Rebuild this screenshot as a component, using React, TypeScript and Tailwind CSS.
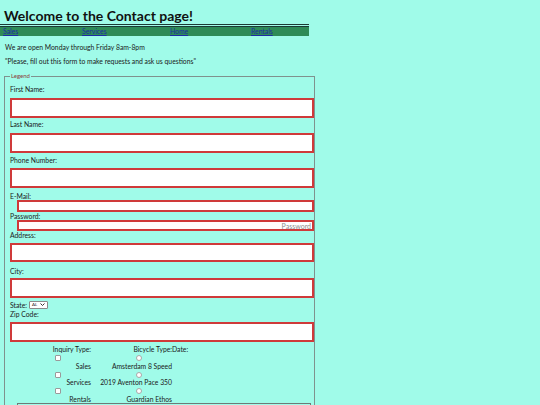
import React from "react"

const inquiry = ["Sales", "Services", "Rentals"]
const bikes = ["Amsterdam 8 Speed", "2019 Aventon Pace 350", "Guardian Ethos"]

function Field({ label, mt, inputMt, h }: { label: string; mt: string; inputMt: string; h: string }) {
  return (
    <>
      <label className={`block leading-[9px] ${mt}`}>{label}</label>
      <input
        type="text"
        className={`block w-[304px] border-2 border-[#cf3a3a] bg-white outline-none ${inputMt} ${h}`}
      />
    </>
  )
}

export default function App() {
  return (
    <div className="min-h-[405px] w-full overflow-hidden bg-[#a0fbe9] font-['Lato',sans-serif] text-[6.8px] text-[#1a1a1a]">
      <div className="w-[309px]">
        <h1 className="h-[24px] pl-[4px] pt-[9px] text-[14px] font-bold leading-[14px] text-[#111]">
          Welcome to the Contact page!
        </h1>
        <div className="h-px bg-[#1b3a34]" />
        <div className="h-px" />
        <div className="h-px bg-[#1b3a34]" />
        <nav className="flex h-[9px] bg-[#2e8b57] pl-[3px] leading-[9px]">
          <a href="#" className="w-[79px] text-[#1d2aa6] underline">Sales</a>
          <a href="#" className="w-[88px] text-[#1d2aa6] underline">Services</a>
          <a href="#" className="w-[81px] text-[#1d2aa6] underline">Home</a>
          <a href="#" className="text-[#1d2aa6] underline">Rentals</a>
        </nav>
      </div>

      <p className="mt-[7px] pl-[5px] leading-[9px]">We are open Monday through Friday 8am-8pm</p>
      <p className="mt-[5px] pl-[5px] leading-[9px]">"Please, fill out this form to make requests and ask us questions"</p>

      <form>
        <fieldset className="ml-[4px] mt-[6px] w-[304px] border border-[#7f928e] pb-[20px] pl-[5px]">
          <legend className="px-[1px] text-[6px] leading-[8px] text-[#8b3c3c]">Legend</legend>

          <Field label="First Name:" mt="mt-[5px]" inputMt="mt-[4px]" h="h-[20px]" />
          <Field label="Last Name:" mt="mt-[2px]" inputMt="mt-[4px]" h="h-[20px]" />
          <Field label="Phone Number:" mt="mt-[3px]" inputMt="mt-[3px]" h="h-[20px]" />

          <label className="mt-[4px] block leading-[8px]">E-Mail:</label>
          <input type="email" className="ml-[7px] block h-[12px] w-[297px] border-2 border-[#cf3a3a] bg-white outline-none" />
          <label className="block leading-[8px]">Password:</label>
          <input
            type="password"
            placeholder="Password"
            className="ml-[7px] block h-[11px] w-[297px] border-2 border-[#cf3a3a] bg-white pr-px text-right text-[7px] leading-[7px] outline-none placeholder:text-[#8c8c8c]"
          />

          <label className="block leading-[8px]">Address:</label>
          <input type="text" className="mt-[4px] block h-[19px] w-[304px] border-2 border-[#cf3a3a] bg-white outline-none" />
          <label className="mt-[5px] block leading-[8px]">City:</label>
          <input type="text" className="mt-[3px] block h-[20px] w-[304px] border-2 border-[#cf3a3a] bg-white outline-none" />

          <div className="mt-[2px] flex h-[9px] items-center">
            <span className="leading-[8px]">State:</span>
            <div className="ml-[2px] flex h-[8px] w-[19px] items-center justify-between rounded-[1px] border border-[#8a8a8a] bg-white pl-[2px] pr-[2px]">
              <span className="text-[4.5px] leading-[4px]">AL</span>
              <svg width="5" height="3" viewBox="0 0 5 3">
                <path d="M0.5 0.5 L2.5 2.5 L4.5 0.5" fill="none" stroke="#333" strokeWidth="1" />
              </svg>
            </div>
          </div>
          <label className="mt-[1px] block leading-[8px]">Zip Code:</label>
          <input type="text" className="mt-[4px] block h-[20px] w-[304px] border-2 border-[#cf3a3a] bg-white outline-none" />

          <div className="mt-[3px] flex whitespace-nowrap leading-[8px]">
            <div className="w-[42px]" />
            <div className="flex w-[39px] justify-end">Inquiry Type:</div>
            <div className="w-[12px]" />
            <div className="flex w-[69px] justify-end">Bicycle Type:</div>
            <div>Date:</div>
          </div>

          {inquiry.map((item, i) => (
            <div key={item} className="flex h-[16.5px] whitespace-nowrap leading-[8px]">
              <div className="w-[42px]" />
              <div className="flex w-[39px] flex-col">
                <input
                  type="checkbox"
                  className="ml-[3px] mt-[2px] h-[6px] w-[6px] appearance-none rounded-[1px] border border-[#9a9a9a] bg-white"
                />
                <span className="mt-[0.5px] flex justify-end">{item}</span>
              </div>
              <div className="w-[12px]" />
              <div className="flex w-[69px] flex-col">
                <input
                  type="radio"
                  name="bike"
                  className="ml-[33px] mt-[2px] h-[6px] w-[6px] appearance-none rounded-full border border-[#a8a8a8] bg-white"
                />
                <span className="mt-[0.5px] flex justify-end">{bikes[i]}</span>
              </div>
            </div>
          ))}

          <textarea className="ml-[7px] mt-[0.5px] block h-[60px] w-[294px] resize-none border border-[#6d7a77] bg-transparent outline-none" />
        </fieldset>
      </form>
    </div>
  )
}
